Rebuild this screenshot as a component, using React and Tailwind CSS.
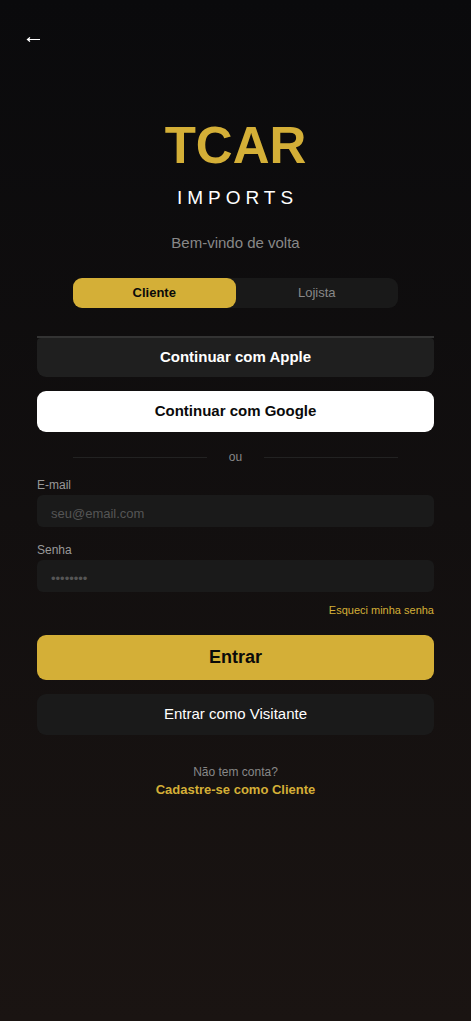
import { useState } from 'react';

const TABS = ['Cliente', 'Lojista'];

function AccountTabs({ value, onChange }) {
  return (
    <div role="tablist" aria-label="Tipo de conta" className="mx-9 flex rounded-[9px] bg-[#191919]">
      {TABS.map((tab) => (
        <button
          key={tab}
          type="button"
          role="tab"
          aria-selected={value === tab}
          onClick={() => onChange(tab)}
          className={
            value === tab
              ? 'h-[30px] flex-1 rounded-[9px] bg-[#d4af37] text-[13px] font-bold text-[#0a0a0a]'
              : 'h-[30px] flex-1 rounded-[9px] text-[13px] text-[#888888]'
          }
        >
          {tab}
        </button>
      ))}
    </div>
  );
}

function Field({ id, label, type, placeholder }) {
  return (
    <div className="flex flex-col">
      <label htmlFor={id} className="text-[12px] leading-5 text-[#999999]">
        {label}
      </label>
      <input
        id={id}
        type={type}
        placeholder={placeholder}
        className="h-8 w-full rounded-md bg-[#1a1a1a] px-[14px] pt-1 text-[13px] text-white outline-none placeholder:text-[#555555]"
      />
    </div>
  );
}

export default function App() {
  const [account, setAccount] = useState('Cliente');

  return (
    <div className="flex min-h-screen flex-col bg-linear-to-b from-[#0a0a0c] to-[#1a1412] font-['Liberation_Sans',Arial,sans-serif]">
      <header className="flex h-[78px] items-center px-[25px]">
        <button type="button" aria-label="Voltar" className="text-white">
          <svg width="16" height="16" viewBox="0 0 16 16" fill="currentColor" aria-hidden="true">
            <path d="M2.5 8H15V9H2.5Z" />
            <path d="M1.5 8.5L4.6 5.9L5.3 6.6L4.2 8.5L5.3 10.4L4.6 11.1Z" />
          </svg>
        </button>
      </header>

      <main className="flex flex-col px-[37px] pt-10">
        <h1 className="text-center text-[51px] leading-[56px] font-bold text-[#d4af37]">TCAR</h1>
        <p className="mt-3 pl-1 text-center text-[19px] leading-6 tracking-[5px] text-white">IMPORTS</p>
        <p className="mt-[23px] mb-[25px] text-center text-[15px] leading-5 text-[#888888]">Bem-vindo de volta</p>

        <AccountTabs value={account} onChange={setAccount} />

        <div className="mt-7 flex flex-col gap-[14px]">
          <div className="flex border-t-2 border-[#333333]">
            <button type="button" className="h-[39px] flex-1 rounded-t-sm rounded-b-[9px] bg-[#1f1f1f] text-[15px] font-bold text-white">
              Continuar com Apple
            </button>
          </div>
          <button type="button" className="h-[41px] rounded-[9px] bg-white text-[15px] font-bold text-[#0a0a0a]">
            Continuar com Google
          </button>
        </div>

        <div className="mx-9 mt-[15px] flex items-center">
          <span className="h-px flex-1 bg-[#222222]" />
          <span className="px-[22px] text-[12px] leading-5 text-[#888888]">ou</span>
          <span className="h-px flex-1 bg-[#222222]" />
        </div>

        <form onSubmit={(event) => event.preventDefault()} className="mt-2 flex flex-col">
          <div className="flex flex-col gap-[13px]">
            <Field id="email" label="E-mail" type="email" placeholder="seu@email.com" />
            <Field id="senha" label="Senha" type="password" placeholder="••••••••" />
          </div>
          <a href="#recuperar" className="mt-2 self-end text-[11px] leading-5 text-[#d4af37]">
            Esqueci minha senha
          </a>
          <button type="submit" className="mt-[15px] h-[45px] rounded-[9px] bg-[#d4af37] text-[18px] font-bold text-[#0a0a0a]">
            Entrar
          </button>
          <button type="button" className="mt-[14px] h-[41px] rounded-[9px] bg-[#1a1a1a] text-[15px] text-white">
            Entrar como Visitante
          </button>
        </form>

        <footer className="mt-7 mb-6 flex flex-col items-center">
          <p className="text-[12px] leading-[18px] text-[#888888]">Não tem conta?</p>
          <a href="#cadastro" className="text-[13px] leading-[18px] font-bold text-[#d4af37]">
            Cadastre-se como {account}
          </a>
        </footer>
      </main>
    </div>
  );
}
